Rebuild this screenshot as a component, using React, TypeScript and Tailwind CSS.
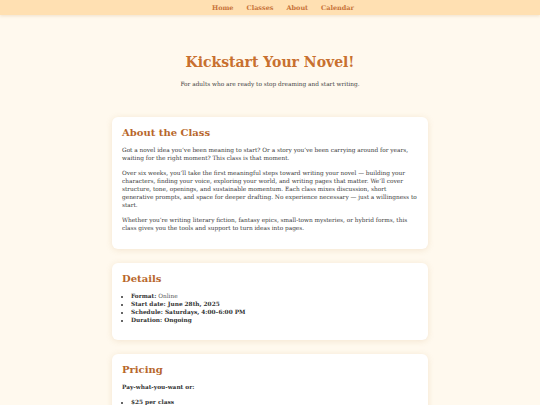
import React from "react";

const serif = { fontFamily: '"DejaVu Serif", "Liberation Serif", serif' };

function Card({ title, children }: { title: string; children: React.ReactNode }) {
  return (
    <section className="bg-white rounded-[6px] px-[10px] pt-[10px] pb-[10px] shadow-[0_1px_6px_rgba(190,140,70,0.18)]">
      <h2 className="text-[10px] leading-[12px] font-bold text-[#b8672c] mb-[7px]">{title}</h2>
      {children}
    </section>
  );
}

export default function App() {
  return (
    <div style={serif} className="min-h-[405px] bg-[#fff9ee] text-[#3a3a3a]">
      <nav className="h-[15px] bg-[#ffe0b2] flex justify-center items-center gap-[13px] pl-[26px] shadow-[0_1px_3px_rgba(180,130,60,0.2)]">
        {["Home", "Classes", "About", "Calendar"].map((n) => (
          <a key={n} className="text-[6.5px] leading-[8px] font-bold text-[#c8743a]">{n}</a>
        ))}
      </nav>
      <header className="text-center pt-[37px] pb-[29px]">
        <h1 className="text-[14px] leading-[20px] font-bold text-[#c8702f]">Kickstart Your Novel!</h1>
        <p className="mt-[8px] text-[5.8px] leading-[8px] text-[#444]">For adults who are ready to stop dreaming and start writing.</p>
      </header>
      <main className="w-[316px] mx-auto flex flex-col gap-[14px] text-[5.8px] leading-[8px]">
        <Card title="About the Class">
          <p className="mb-[7px]">Got a novel idea you’ve been meaning to start? Or a story you’ve been carrying around for years, waiting for the right moment? This class is that moment.</p>
          <p className="mb-[7px]">Over six weeks, you’ll take the first meaningful steps toward writing your novel — building your characters, finding your voice, exploring your world, and writing pages that matter. We’ll cover structure, tone, openings, and sustainable momentum. Each class mixes discussion, short generative prompts, and space for deeper drafting. No experience necessary — just a willingness to start.</p>
          <p className="mb-[7px]">Whether you’re writing literary fiction, fantasy epics, small-town mysteries, or hybrid forms, this class gives you the tools and support to turn ideas into pages.</p>
        </Card>
        <Card title="Details">
          <ul className="list-disc pl-[9px] mb-[6px] text-[#333]">
            <li><b>Format:</b> <span className="text-[#555]">Online</span></li>
            <li><b>Start date: June 28th, 2025</b></li>
            <li><b>Schedule: Saturdays, 4:00–6:00 PM</b></li>
            <li><b>Duration: Ongoing</b></li>
          </ul>
        </Card>
        <Card title="Pricing">
          <p className="mb-[7px] font-bold text-[#333]">Pay-what-you-want or:</p>
          <ul className="list-disc pl-[9px] mb-[6px] text-[#333]">
            <li><b>$25 per class</b></li>
            <li><b>$120 for the full six weeks</b></li>
          </ul>
        </Card>
      </main>
    </div>
  );
}
